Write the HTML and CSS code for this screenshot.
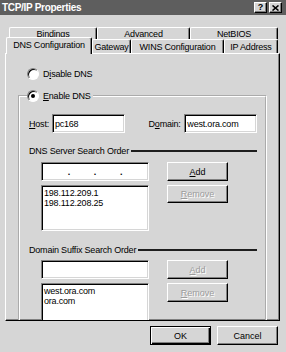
FILE: index.html
```html
<!DOCTYPE html>
<html lang="en">

<head>
    <meta charset="utf-8" />
    <title>TCP/IP Properties</title>
    <link rel="stylesheet" href="styles.css">
</head>

<body>
    <div class="titlebar">
        <span class="title">TCP/IP Properties</span>
        <span class="caption-buttons">
            <span class="cbtn">?</span>
            <span class="cbtn">
                <svg width="7" height="6" viewBox="0 0 7 6">
                    <path d="M0.5 0.5 L6.5 5.5 M6.5 0.5 L0.5 5.5" stroke="#000" stroke-width="1.6" />
                </svg>
            </span>
        </span>
    </div>

    <div class="tabs">
        <div class="tab-row back">
            <div class="tab w88">Bindings</div>
            <div class="tab w93">Advanced</div>
            <div class="tab w88">NetBIOS</div>
        </div>
        <div class="tab-row front">
            <div class="tab selected w86">DNS Configuration</div>
            <div class="tab w39">Gateway</div>
            <div class="tab w93">WINS Configuration</div>
            <div class="tab w54">IP Address</div>
        </div>
    </div>

    <div class="panel">
        <div class="radio-row">
            <span class="radio"></span>
            <span>D<u>i</u>sable DNS</span>
        </div>

        <fieldset class="group">
            <legend class="radio-row">
                <span class="radio on"></span>
                <span><u>E</u>nable DNS</span>
            </legend>
            <div class="group-body">
                <div class="host-row">
                    <span class="lbl-host"><u>H</u>ost:</span>
                    <div class="field w73">pc168</div>
                    <span class="lbl-domain">D<u>o</u>main:</span>
                    <div class="field w73">west.ora.com</div>
                </div>

                <div class="section-head">
                    <span>DNS Server Search Order</span>
                    <span class="rule"></span>
                </div>
                <div class="list-block">
                    <div class="list-col">
                        <div class="field ip"><span>.</span><span>.</span><span>.</span></div>
                        <div class="listbox">
                            <div>198.112.209.1</div>
                            <div>198.112.208.25</div>
                        </div>
                    </div>
                    <div class="btn-col">
                        <button class="btn"><span><u>A</u>dd</span></button>
                        <button class="btn short disabled"><span><u>R</u>emove</span></button>
                    </div>
                </div>

                <div class="section-head second">
                    <span>Domain Suffix Search Order</span>
                    <span class="rule"></span>
                </div>
                <div class="list-block tight">
                    <div class="list-col">
                        <div class="field"></div>
                        <div class="listbox tall">
                            <div>west.ora.com</div>
                            <div>ora.com</div>
                        </div>
                    </div>
                    <div class="btn-col">
                        <button class="btn disabled"><span><u>A</u>dd</span></button>
                        <button class="btn disabled"><span><u>R</u>emove</span></button>
                    </div>
                </div>
            </div>
        </fieldset>
    </div>

    <div class="footer">
        <button class="btn default">OK</button>
        <button class="btn w60">Cancel</button>
    </div>
</body>

</html>
```

FILE: styles.css
```css
* {
    box-sizing: border-box;
}

html,
body {
    margin: 0;
}

body {
    width: 286px;
    height: 352px;
    overflow: hidden;
    background: #d6d6d6;
    font-family: "Liberation Sans", Arial, sans-serif;
    font-size: 9px;
    letter-spacing: -0.2px;
    color: #000;
}

u {
    text-decoration: underline;
    text-underline-offset: 1px;
}

/* title bar */

.titlebar {
    height: 15px;
    background: #5e5e5e;
    color: #fff;
    display: flex;
    align-items: center;
    justify-content: space-between;
    padding: 0 4px 0 2px;
}

.title {
    font-weight: bold;
    font-size: 10px;
    letter-spacing: -0.3px;
}

.caption-buttons {
    display: flex;
    gap: 2px;
}

.cbtn {
    width: 13px;
    height: 11px;
    background: #d6d6d6;
    color: #000;
    border: 1px solid;
    border-color: #fff #000 #000 #fff;
    box-shadow: inset -1px -1px #808080;
    display: flex;
    align-items: center;
    justify-content: center;
    font-weight: bold;
    font-size: 9px;
    line-height: 1;
}

/* tabs */

.tabs {
    margin-top: 12px;
}

.tab-row {
    display: flex;
}

.tab-row.back {
    margin-left: 9px;
    height: 12px;
}

.tab-row.front {
    margin-left: 6px;
    height: 14px;
    position: relative;
    z-index: 1;
}

.tab {
    border: 1px solid;
    border-color: #fff #000 transparent #fff;
    border-bottom: none;
    border-radius: 2px 2px 0 0;
    box-shadow: inset -1px 0 #808080;
    background: #d6d6d6;
    display: flex;
    align-items: center;
    justify-content: center;
    white-space: nowrap;
}

.tab.selected {
    margin-top: -2px;
    height: 17px;
    padding-bottom: 2px;
}

.w39 { width: 39px; }
.w54 { width: 54px; }
.w60 { width: 60px; }
.w73 { width: 73px; }
.w86 { width: 86px; }
.w88 { width: 88px; }
.w93 { width: 93px; }

/* panel */

.panel {
    margin-left: 5px;
    width: 275px;
    height: 268px;
    border: 1px solid;
    border-color: #fff #000 #000 #fff;
    box-shadow: inset -1px -1px #808080;
    overflow: hidden;
    padding-top: 14px;
}

.radio-row {
    display: flex;
    align-items: center;
    gap: 4px;
    height: 12px;
    margin-left: 21px;
}

.radio {
    width: 12px;
    height: 12px;
    border-radius: 50%;
    background: #fff;
    border: 1px solid;
    border-color: #808080 #fff #fff #808080;
    box-shadow: inset 1px 1px #000;
    position: relative;
}

.radio.on::after {
    content: "";
    position: absolute;
    left: 3px;
    top: 3px;
    width: 4px;
    height: 4px;
    border-radius: 50%;
    background: #000;
}

.group {
    margin: 10px 0 0 12px;
    width: 249px;
    height: 260px;
    border: 2px groove #fff;
    padding: 0;
    min-width: 0;
}

.group legend {
    margin-left: 7px;
    padding: 0 2px 0 0;
}

.group-body {
    padding: 0 8px 0 9px;
}

.host-row {
    display: flex;
    align-items: center;
    margin-top: 12px;
}

.lbl-host {
    width: 23px;
}

.lbl-domain {
    width: 36px;
    margin-left: 24px;
}

.field {
    height: 19px;
    background: #fff;
    border: 1px solid;
    border-color: #808080 #fff #fff #808080;
    box-shadow: inset 1px 1px #000, inset -1px -1px #d6d6d6;
    padding: 0 2px;
    display: flex;
    align-items: center;
    white-space: nowrap;
}

.field.ip {
    justify-content: space-evenly;
    font-weight: bold;
}

.section-head {
    display: flex;
    align-items: center;
    gap: 2px;
    height: 12px;
    margin-top: 12px;
    white-space: nowrap;
}

.section-head.second {
    margin-top: 13px;
}

.rule {
    flex: 1;
    height: 2px;
    background: #1e1e1e;
}

.list-block {
    display: flex;
    margin: 5px 0 0 12px;
}

.list-block.tight {
    margin-top: 4px;
}

.list-col {
    width: 108px;
    display: flex;
    flex-direction: column;
    gap: 4px;
}

.listbox {
    height: 46px;
    background: #fff;
    border: 1px solid;
    border-color: #808080 #fff #fff #808080;
    box-shadow: inset 1px 1px #000, inset -1px -1px #d6d6d6;
    padding: 2px 2px;
    line-height: 10px;
}

.listbox.tall {
    height: 44px;
}

.btn-col {
    margin-left: 18px;
    display: flex;
    flex-direction: column;
    gap: 4px;
}

.btn {
    width: 61px;
    height: 19px;
    padding: 0;
    background: #d6d6d6;
    border: 1px solid;
    border-color: #fff #000 #000 #fff;
    box-shadow: inset -1px -1px #808080;
    font: inherit;
    color: #000;
    display: flex;
    align-items: center;
    justify-content: center;
}

.btn.short {
    height: 18px;
}

.btn.disabled {
    color: #9c9c9c;
    text-shadow: 1px 1px #fff;
}

.btn.default {
    border-color: #000;
    box-shadow: inset 1px 1px #fff, inset -1px -1px #000, inset -2px -2px #808080;
}

/* bottom buttons */

.footer {
    display: flex;
    justify-content: flex-end;
    gap: 6px;
    margin-top: 5px;
    padding-right: 8px;
}
```
